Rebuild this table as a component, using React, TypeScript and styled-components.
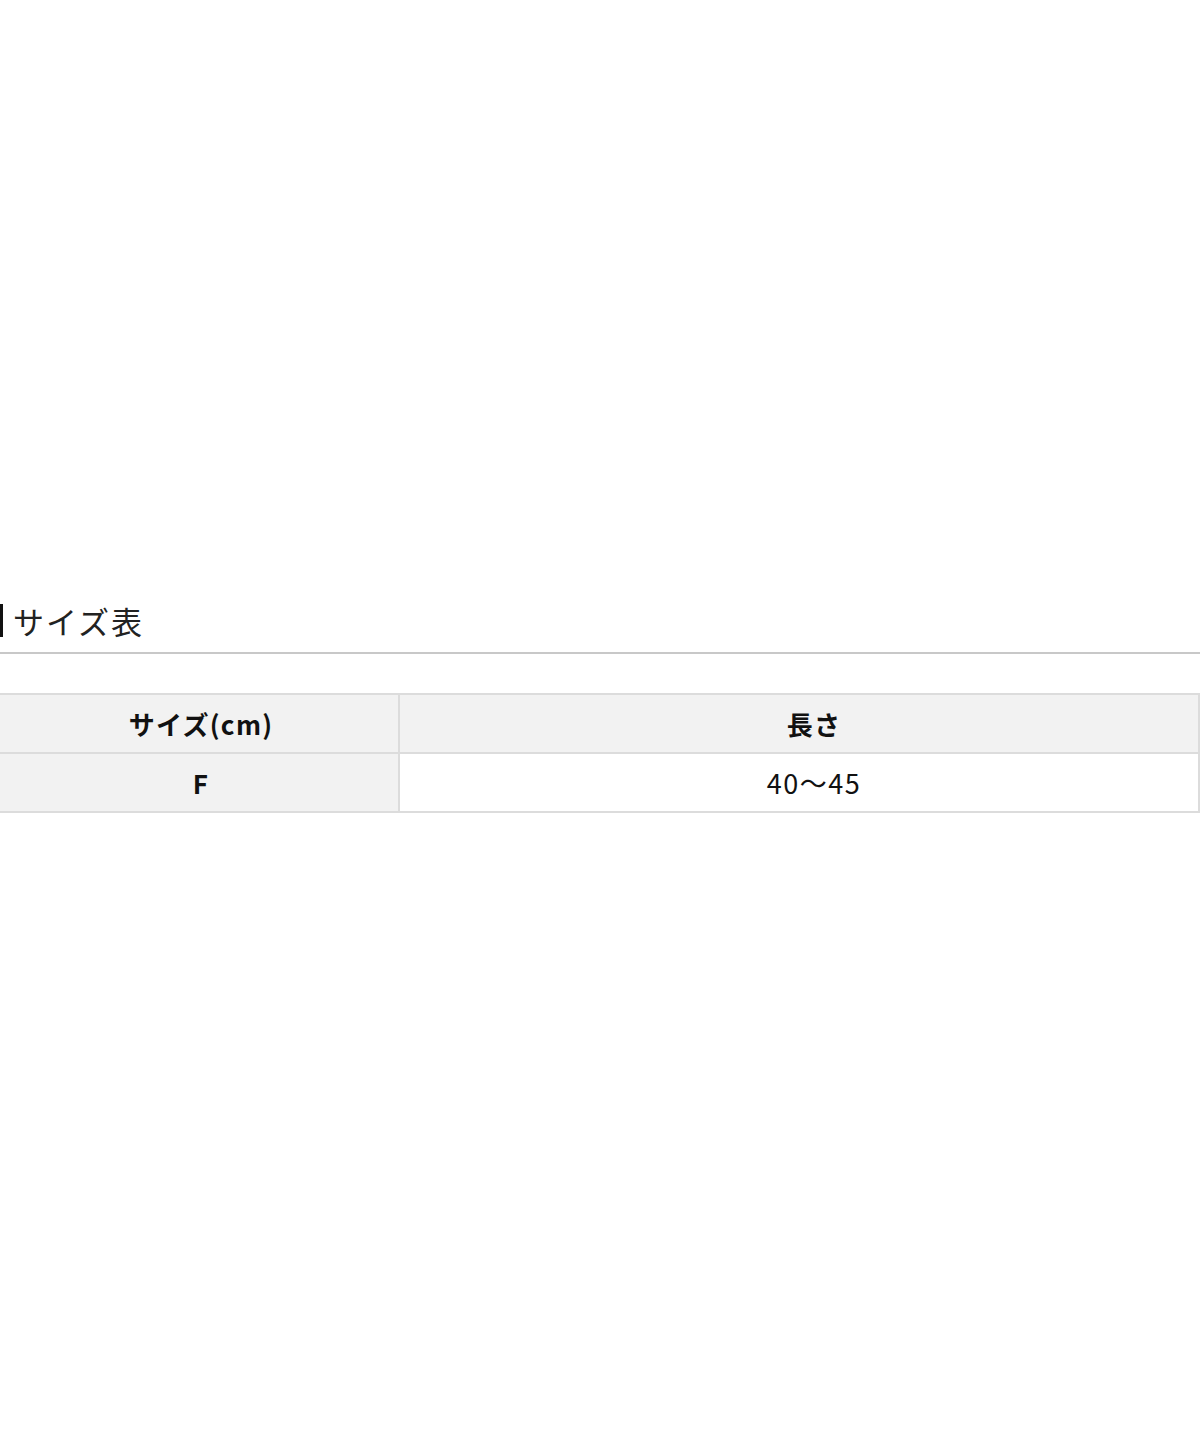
import React from "react";
import styled, { createGlobalStyle } from "styled-components";

const Global = createGlobalStyle`
  html, body { margin: 0; padding: 0; background: #fff; }
  body { font-family: "Noto Sans CJK JP", "Noto Sans", sans-serif; color: #111; }
`;

const Page = styled.div`
  width: 1200px;
  height: 1440px;
  padding-top: 600px;
  box-sizing: border-box;
`;

const Heading = styled.h2`
  margin: 0;
  display: flex;
  align-items: center;
  gap: 10px;
  height: 40px;
  font-size: 31px;
  font-weight: 400;
  color: #222;
  letter-spacing: 2px;
  padding-bottom: 12px;
  border-bottom: 2px solid #c8c8c8;
`;

const Bar = styled.span`
  width: 3px;
  height: 33px;
  background: #111;
`;

const Table = styled.table`
  margin-top: 39px;
  width: 1200px;
  border-collapse: collapse;
  table-layout: fixed;
`;

const Cell = styled.td<{ $head?: boolean; $shade?: boolean }>`
  height: 57px;
  padding: 0 0 0 30px;
  text-align: center;
  font-size: ${(p) => (p.$head ? "26px" : "27px")};
  letter-spacing: ${(p) => (p.$head ? "1.3px" : "1.5px")};
  font-weight: ${(p) => (p.$head ? 700 : 400)};
  background: ${(p) => (p.$shade ? "#f2f2f2" : "#fff")};
  border: 2px solid #dcdcdc;
  border-left: none;
  color: #111;
  &:first-child { width: 394px; padding-left: 4px; }
`;

export default function App() {
  return (
    <Page>
      <Global />
      <Heading>
        <Bar />
        サイズ表
      </Heading>
      <Table>
        <tbody>
          <tr>
            <Cell $head $shade>サイズ(cm)</Cell>
            <Cell $head $shade>長さ</Cell>
          </tr>
          <tr>
            <Cell $head $shade>F</Cell>
            <Cell>40〜45</Cell>
          </tr>
        </tbody>
      </Table>
    </Page>
  );
}
